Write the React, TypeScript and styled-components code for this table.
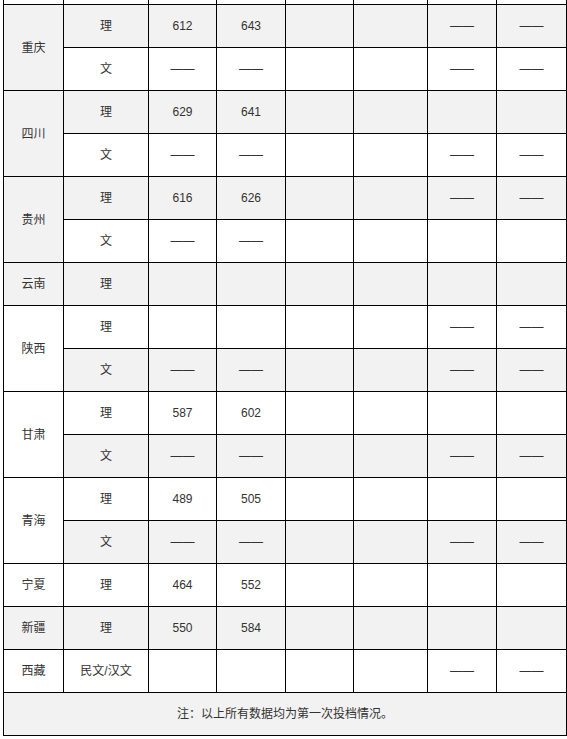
import React from 'react'
import styled, { createGlobalStyle } from 'styled-components'

const GlobalStyle = createGlobalStyle`
  html, body {
    margin: 0;
    padding: 0;
    background: #fff;
  }
  body {
    overflow: hidden;
  }
`

const Page = styled.div`
  height: 739px;
  padding-left: 3px;
  overflow: hidden;
`

// the page is scrolled: only the bottom edge of the previous row is visible
const Table = styled.table`
  margin-top: -39px;
  width: 564px;
  table-layout: fixed;
  border-collapse: collapse;
  font-family: 'Liberation Sans', 'Noto Sans CJK SC', sans-serif;
  font-size: 12px;
  color: #333;
`

const Row = styled.tr<{ $shade: boolean }>`
  background: ${(p) => (p.$shade ? '#f2f2f2' : '#fff')};
`

const Cell = styled.td`
  height: 43px;
  padding: 0 2px;
  border: 1px solid #000;
  text-align: center;
  vertical-align: middle;
  line-height: 18px;
  box-sizing: border-box;
`

const colWidths = [60, 85, 68, 69, 68, 74, 69, 70]

const D = '——'

type Line = { kind: string; values: (string | number)[] }
type Group = { name: string; lines: Line[] }

const groups: Group[] = [
  // row above the visible area, scrolled out of view
  { name: '', lines: [{ kind: '', values: ['', '', '', '', '', ''] }] },
  {
    name: '重庆',
    lines: [
      { kind: '理', values: [612, 643, '', '', D, D] },
      { kind: '文', values: [D, D, '', '', D, D] },
    ],
  },
  {
    name: '四川',
    lines: [
      { kind: '理', values: [629, 641, '', '', '', ''] },
      { kind: '文', values: [D, D, '', '', D, D] },
    ],
  },
  {
    name: '贵州',
    lines: [
      { kind: '理', values: [616, 626, '', '', D, D] },
      { kind: '文', values: [D, D, '', '', '', ''] },
    ],
  },
  { name: '云南', lines: [{ kind: '理', values: ['', '', '', '', '', ''] }] },
  {
    name: '陕西',
    lines: [
      { kind: '理', values: ['', '', '', '', D, D] },
      { kind: '文', values: [D, D, '', '', D, D] },
    ],
  },
  {
    name: '甘肃',
    lines: [
      { kind: '理', values: [587, 602, '', '', '', ''] },
      { kind: '文', values: [D, D, '', '', D, D] },
    ],
  },
  {
    name: '青海',
    lines: [
      { kind: '理', values: [489, 505, '', '', '', ''] },
      { kind: '文', values: [D, D, '', '', D, D] },
    ],
  },
  { name: '宁夏', lines: [{ kind: '理', values: [464, 552, '', '', '', ''] }] },
  { name: '新疆', lines: [{ kind: '理', values: [550, 584, '', '', '', ''] }] },
  { name: '西藏', lines: [{ kind: '民文/汉文', values: ['', '', '', '', D, D] }] },
]

const App = () => {
  let index = 0
  const rows: React.ReactNode[] = []

  groups.forEach((group, g) => {
    group.lines.forEach((line, i) => {
      const shade = index % 2 === 1
      rows.push(
        <Row key={`${g}-${i}`} $shade={shade}>
          {i === 0 && <Cell rowSpan={group.lines.length}>{group.name}</Cell>}
          <Cell>{line.kind}</Cell>
          {line.values.map((v, j) => (
            <Cell key={j}>{v}</Cell>
          ))}
        </Row>,
      )
      index++
    })
  })

  return (
    <>
      <GlobalStyle />
      <Page>
        <Table>
          <colgroup>
            {colWidths.map((w, i) => (
              <col key={i} style={{ width: w }} />
            ))}
          </colgroup>
          <tbody>
            {rows}
            <Row $shade={index % 2 === 1}>
              <Cell colSpan={8}>注：以上所有数据均为第一次投档情况。</Cell>
            </Row>
          </tbody>
        </Table>
      </Page>
    </>
  )
}

export default App
